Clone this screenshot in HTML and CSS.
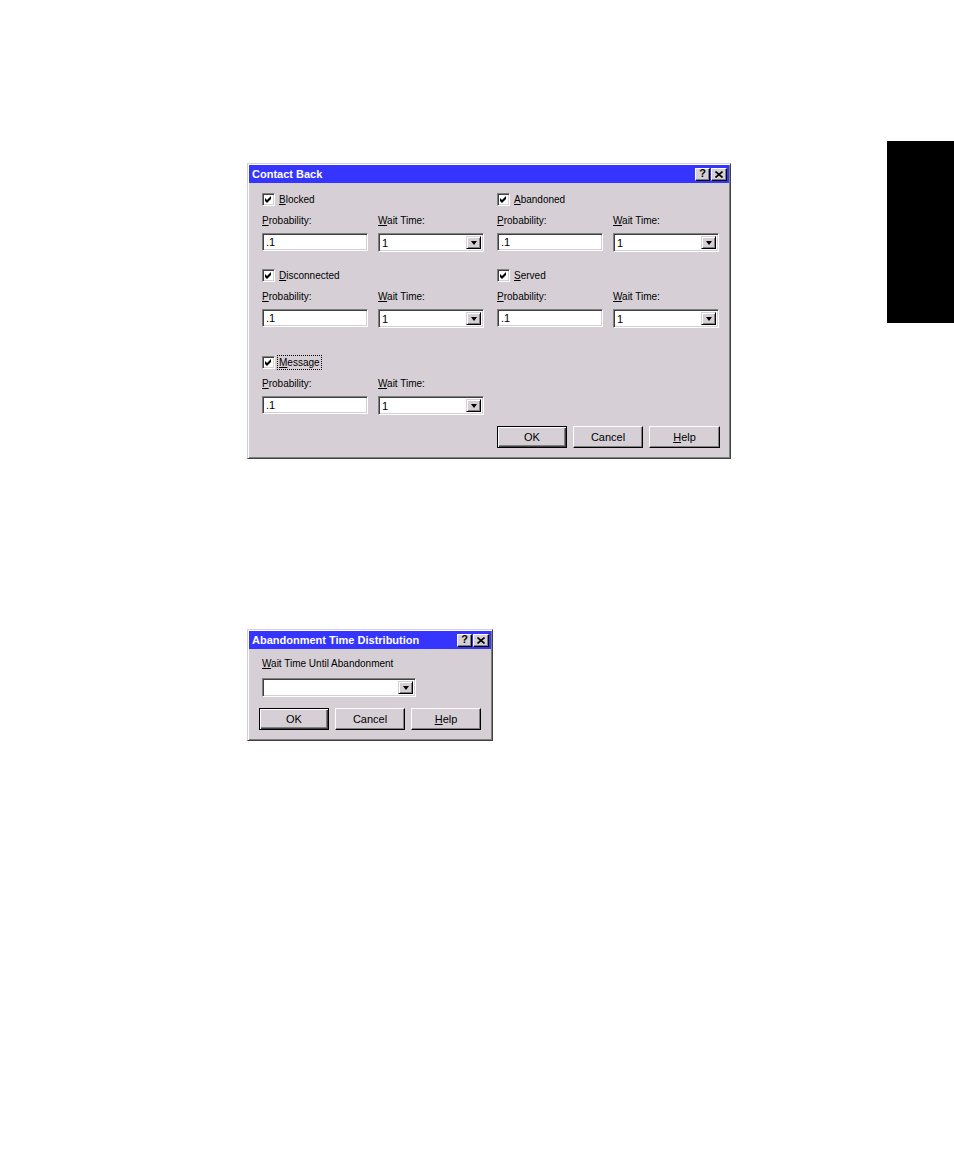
FILE: index.html
```html
<!DOCTYPE html>
<html>
<head>
<meta charset="utf-8">
<link rel="stylesheet" href="styles.css">
</head>
<body>
<div class="tab"></div>
<div class="page">

  <div class="dialog dialog-contact">
    <div class="titlebar">
      <span class="title">Contact Back</span>
      <div class="tb-buttons">
        <span class="tb-btn tb-help">?</span>
        <span class="tb-btn tb-close"><svg width="8" height="7" viewBox="0 0 8 7"><path d="M0.5 0.5 L7.5 6.5 M7.5 0.5 L0.5 6.5" stroke="#000" stroke-width="1.6" fill="none"/></svg></span>
      </div>
    </div>
    <div class="body">
      <div class="groups">
        <div class="group">
          <div class="check-row"><span class="checkbox"><svg width="9" height="9" viewBox="0 0 9 9"><polygon points="1,3 3,5 7,1 7,4 3,8 1,6" fill="#000"/></svg></span><span class="check-label"><u>B</u>locked</span></div>
          <div class="label"><u>P</u>robability:</div>
          <div class="label"><u>W</u>ait Time:</div>
          <div class="input">.1</div>
          <div class="combo"><span class="combo-text">1</span><span class="combo-btn"><span class="arrow"></span></span></div>
        </div>
        <div class="group">
          <div class="check-row"><span class="checkbox"><svg width="9" height="9" viewBox="0 0 9 9"><polygon points="1,3 3,5 7,1 7,4 3,8 1,6" fill="#000"/></svg></span><span class="check-label"><u>A</u>bandoned</span></div>
          <div class="label"><u>P</u>robability:</div>
          <div class="label"><u>W</u>ait Time:</div>
          <div class="input">.1</div>
          <div class="combo"><span class="combo-text">1</span><span class="combo-btn"><span class="arrow"></span></span></div>
        </div>
        <div class="group">
          <div class="check-row"><span class="checkbox"><svg width="9" height="9" viewBox="0 0 9 9"><polygon points="1,3 3,5 7,1 7,4 3,8 1,6" fill="#000"/></svg></span><span class="check-label"><u>D</u>isconnected</span></div>
          <div class="label"><u>P</u>robability:</div>
          <div class="label"><u>W</u>ait Time:</div>
          <div class="input">.1</div>
          <div class="combo"><span class="combo-text">1</span><span class="combo-btn"><span class="arrow"></span></span></div>
        </div>
        <div class="group">
          <div class="check-row"><span class="checkbox"><svg width="9" height="9" viewBox="0 0 9 9"><polygon points="1,3 3,5 7,1 7,4 3,8 1,6" fill="#000"/></svg></span><span class="check-label"><u>S</u>erved</span></div>
          <div class="label"><u>P</u>robability:</div>
          <div class="label"><u>W</u>ait Time:</div>
          <div class="input">.1</div>
          <div class="combo"><span class="combo-text">1</span><span class="combo-btn"><span class="arrow"></span></span></div>
        </div>
        <div class="group group-last">
          <div class="check-row"><span class="checkbox"><svg width="9" height="9" viewBox="0 0 9 9"><polygon points="1,3 3,5 7,1 7,4 3,8 1,6" fill="#000"/></svg></span><span class="check-label focus"><u>M</u>essage</span></div>
          <div class="label"><u>P</u>robability:</div>
          <div class="label"><u>W</u>ait Time:</div>
          <div class="input">.1</div>
          <div class="combo"><span class="combo-text">1</span><span class="combo-btn"><span class="arrow"></span></span></div>
        </div>
      </div>
      <div class="buttons buttons-right">
        <span class="btn btn-default">OK</span>
        <span class="btn">Cancel</span>
        <span class="btn btn-wide"><u>H</u>elp</span>
      </div>
    </div>
  </div>

  <div class="dialog dialog-abandon">
    <div class="titlebar">
      <span class="title">Abandonment Time Distribution</span>
      <div class="tb-buttons">
        <span class="tb-btn tb-help">?</span>
        <span class="tb-btn tb-close"><svg width="8" height="7" viewBox="0 0 8 7"><path d="M0.5 0.5 L7.5 6.5 M7.5 0.5 L0.5 6.5" stroke="#000" stroke-width="1.6" fill="none"/></svg></span>
      </div>
    </div>
    <div class="body2">
      <div class="label2"><u>W</u>ait Time Until Abandonment</div>
      <div class="combo combo-long"><span class="combo-text"></span><span class="combo-btn"><span class="arrow"></span></span></div>
      <div class="buttons buttons-left">
        <span class="btn btn-default">OK</span>
        <span class="btn">Cancel</span>
        <span class="btn"><u>H</u>elp</span>
      </div>
    </div>
  </div>

</div>
</body>
</html>
```

FILE: styles.css
```css
html, body {
  margin: 0;
  padding: 0;
  background: #ffffff;
}

body {
  font-family: "Liberation Sans", Arial, sans-serif;
  font-size: 10px;
  color: #000;
}

.tab {
  float: right;
  width: 67px;
  height: 182px;
  margin-top: 141px;
  background: #000;
}

.page {
  padding-top: 163px;
  padding-left: 247px;
}

.dialog {
  box-sizing: border-box;
  background: #d6d0d6;
  border: 1px solid;
  border-color: #d6d0d6 #404040 #404040 #d6d0d6;
  box-shadow: inset 1px 1px 0 #ffffff, inset -1px -1px 0 #808080;
  padding: 1px;
  display: flex;
  flex-direction: column;
}

.dialog-contact {
  width: 484px;
  height: 296px;
}

.dialog-abandon {
  width: 246px;
  height: 112px;
  margin-top: 170px;
}

.titlebar {
  height: 18px;
  background: #3535ff;
  display: flex;
  align-items: center;
  justify-content: space-between;
  padding-left: 3px;
  padding-right: 2px;
}

.title {
  color: #ffffff;
  font-weight: bold;
  font-size: 11px;
  line-height: 18px;
}

.tb-buttons {
  display: flex;
  gap: 1px;
}

.tb-btn {
  box-sizing: border-box;
  width: 15px;
  height: 13px;
  background: #d6d0d6;
  border: 1px solid;
  border-color: #ffffff #000000 #000000 #ffffff;
  box-shadow: inset -1px -1px 0 #808080;
  display: flex;
  align-items: center;
  justify-content: center;
  font-weight: bold;
  font-size: 11px;
  line-height: 11px;
}

.tb-help {
  padding-bottom: 1px;
}

.tb-close {
  width: 16px;
}

.body {
  padding: 10px 9px 0 13px;
}

.groups {
  display: grid;
  grid-template-columns: 222px 222px;
  column-gap: 13px;
  row-gap: 17px;
}

.group {
  display: grid;
  grid-template-columns: 106px 106px;
  column-gap: 10px;
  grid-template-rows: 21px 19px 19px;
  align-items: start;
}

.group-last {
  margin-top: 11px;
}

.check-row {
  grid-column: 1 / 3;
  display: flex;
  align-items: center;
  height: 13px;
}

.checkbox {
  box-sizing: border-box;
  width: 13px;
  height: 13px;
  background: #ffffff;
  border: 1px solid;
  border-color: #808080 #ffffff #ffffff #808080;
  box-shadow: inset 1px 1px 0 #404040, inset -1px -1px 0 #d6d0d6;
  display: flex;
  align-items: center;
  justify-content: center;
  flex: none;
}

.checkbox svg {
  display: block;
}

.check-label {
  margin-left: 4px;
  line-height: 13px;
}

.focus {
  outline: 1px dotted #000;
  outline-offset: 0;
  padding: 0 1px;
  margin-left: 3px;
}

.label {
  line-height: 14px;
  height: 14px;
}

.input,
.combo {
  box-sizing: border-box;
  height: 18px;
  background: #ffffff;
  border: 1px solid;
  border-color: #808080 #ffffff #ffffff #808080;
  box-shadow: inset 1px 1px 0 #404040, inset -1px -1px 0 #d6d0d6;
  padding: 2px 3px 0 3px;
  line-height: 13px;
  font-size: 11px;
}

.combo {
  height: 19px;
  display: flex;
  justify-content: space-between;
  padding: 2px 2px 2px 3px;
}

.combo-text {
  line-height: 14px;
}

.combo-btn {
  box-sizing: border-box;
  width: 15px;
  height: 13px;
  background: #d6d0d6;
  border: 1px solid;
  border-color: #d6d0d6 #000000 #000000 #d6d0d6;
  box-shadow: inset 1px 1px 0 #ffffff, inset -1px -1px 0 #808080;
  display: flex;
  align-items: center;
  justify-content: center;
}

.arrow {
  width: 0;
  height: 0;
  border-left: 3.5px solid transparent;
  border-right: 3.5px solid transparent;
  border-top: 4px solid #000;
}

.buttons {
  display: flex;
  gap: 6px;
}

.buttons-right {
  justify-content: flex-end;
  margin-top: 11px;
}

.buttons-left {
  margin-top: 11px;
  margin-left: -3px;
}

.btn {
  box-sizing: border-box;
  width: 70px;
  height: 22px;
  background: #d6d0d6;
  border: 1px solid;
  border-color: #ffffff #000000 #000000 #ffffff;
  box-shadow: inset -1px -1px 0 #808080;
  display: flex;
  align-items: center;
  justify-content: center;
  font-size: 11px;
}

.btn-wide {
  width: 71px;
}

.btn-default {
  border: 1px solid #000;
  box-shadow: inset 1px 1px 0 #ffffff, inset -1px -1px 0 #404040, inset -2px -2px 0 #808080;
}

.body2 {
  padding: 8px 0 0 13px;
}

.label2 {
  line-height: 14px;
  height: 14px;
}

.combo-long {
  width: 154px;
  margin-top: 7px;
}
```
